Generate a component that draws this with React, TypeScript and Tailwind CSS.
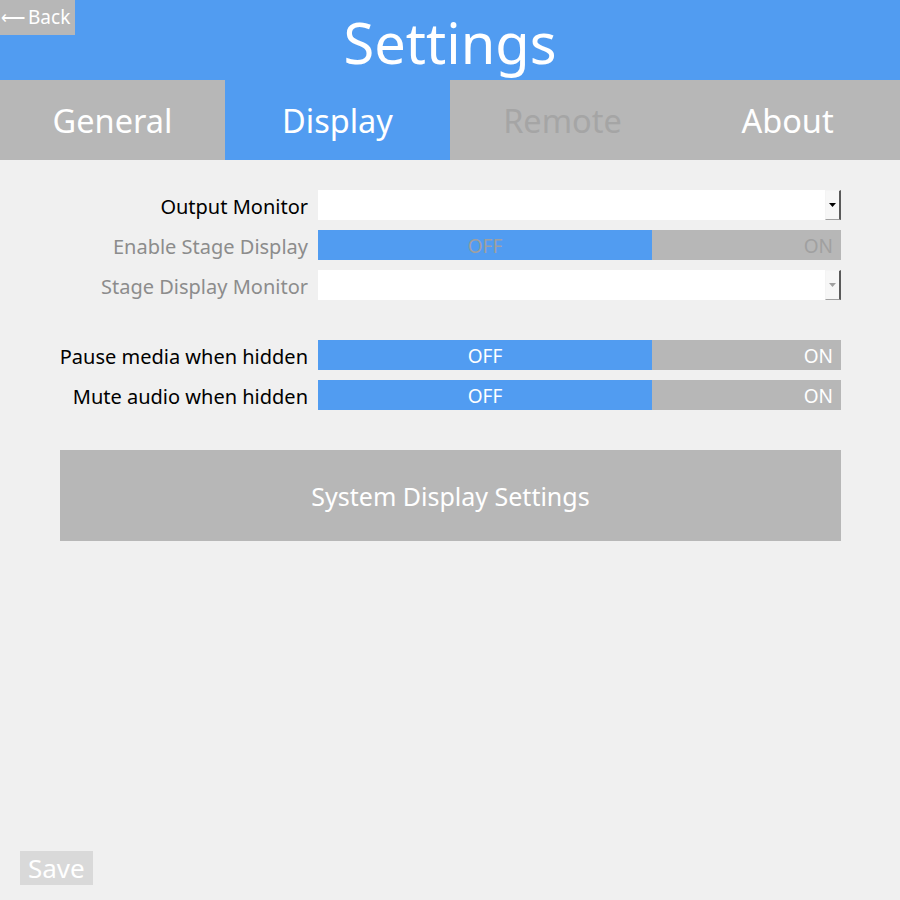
import React from 'react'

const font = { fontFamily: '"Noto Sans", "Open Sans", sans-serif' }

const Dropdown = ({ disabled }: { disabled?: boolean }) => (
    <div className="flex h-[30px] w-[523px] bg-white justify-end">
        <div className="w-[16px] h-[30px] border-l border-t border-[#f4f4f4] border-r-2 border-r-[#5a5a5a] border-b border-b-[#a0a0a0] bg-[#f7f7f7] flex items-center justify-center">
            <svg width="7" height="4" viewBox="0 0 7 4">
                <polygon points="0,0 7,0 3.5,4" fill={disabled ? '#a0a0a0' : '#000'} />
            </svg>
        </div>
    </div>
)

const Toggle = ({ disabled }: { disabled?: boolean }) => (
    <div className={`flex h-[30px] w-[523px] text-[19px] leading-none ${disabled ? 'text-[#a0a0a0]' : 'text-white'}`}>
        <div className="w-[334px] bg-[#519cf1] flex items-center justify-center pt-[2px]">OFF</div>
        <div className="flex-1 bg-[#b7b7b7] flex items-center justify-end pr-[8px] pt-[2px]">ON</div>
    </div>
)

const Row = ({ label, muted, children }: { label: string; muted?: boolean; children: React.ReactNode }) => (
    <div className="flex items-center h-[30px]">
        <div className={`w-[308px] pt-[3px] text-right text-[20px] leading-none ${muted ? 'text-[#8c8c8c]' : 'text-black'}`}>{label}</div>
        <div className="ml-[10px]">{children}</div>
    </div>
)

export default function App() {
    const tabs = ['General', 'Display', 'Remote', 'About']
    return (
        <div className="w-[900px] h-[900px] bg-[#f0f0f0] flex flex-col relative" style={font}>
            <div className="h-[80px] bg-[#519cf1] flex items-center justify-center relative">
                <button className="absolute left-0 top-0 h-[35px] w-[75px] bg-[#b7b7b7] text-white text-[19px] leading-none flex items-center pl-[1px] gap-[3px]">
                    <span className="text-[17px]">⟵</span>Back
                </button>
                <span className="text-white text-[56px] leading-none pt-[4px]">Settings</span>
            </div>
            <div className="flex h-[80px]">
                {tabs.map((t) => (
                    <div
                        key={t}
                        className={`flex-1 flex items-center justify-center text-[32.5px] pt-[3px] ${t === 'Display' ? 'bg-[#519cf1] text-white' : 'bg-[#b7b7b7]'} ${t === 'Remote' ? 'text-[#a5a5a5]' : 'text-white'}`}
                    >
                        {t}
                    </div>
                ))}
            </div>
            <div className="flex flex-col pt-[30px]">
                <div className="flex flex-col gap-[10px]">
                    <Row label="Output Monitor"><Dropdown /></Row>
                    <Row label="Enable Stage Display" muted><Toggle disabled /></Row>
                    <Row label="Stage Display Monitor" muted><Dropdown disabled /></Row>
                </div>
                <div className="flex flex-col gap-[10px] mt-[40px]">
                    <Row label="Pause media when hidden"><Toggle /></Row>
                    <Row label="Mute audio when hidden"><Toggle /></Row>
                </div>
                <button className="ml-[60px] mt-[40px] w-[781px] h-[91px] bg-[#b7b7b7] text-white text-[25px] pt-[2px]">
                    System Display Settings
                </button>
            </div>
            <div className="flex-1" />
            <div className="pl-[20px] pb-[15px]">
                <button className="h-[34px] px-[8px] bg-[#d9d9d9] text-white text-[26px] leading-none">Save</button>
            </div>
        </div>
    )
}
